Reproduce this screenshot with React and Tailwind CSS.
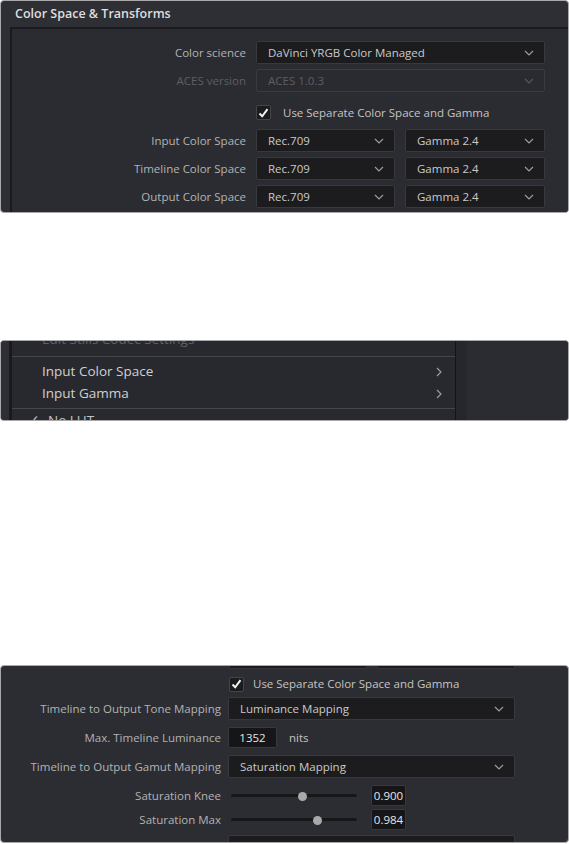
import React from "react";

const font = "font-['Open_Sans','Noto_Sans',sans-serif]";

function Chevron({ dim }) {
  return (
    <svg width="10" height="6" viewBox="0 0 10 6" className="shrink-0">
      <polyline
        points="1,1 5,5 9,1"
        fill="none"
        stroke={dim ? "#55565b" : "#9a9b9f"}
        strokeWidth="1.2"
      />
    </svg>
  );
}

function Select({ value, width, dim, height = "h-[23px]" }) {
  return (
    <div
      className={`${width} ${height} shrink-0 flex items-center justify-between pl-[11px] pr-[10px] rounded-[2px] border ${
        dim
          ? "bg-[#2a2b30] border-[#3a3b40] text-[#5d5e63]"
          : "bg-[#1c1c1f] border-[#38393e] text-[#c9c9c9]"
      }`}
    >
      <span>{value}</span>
      <Chevron dim={dim} />
    </div>
  );
}

function Check() {
  return (
    <div className="w-[15px] h-[15px] rounded-[2px] bg-[#1c1c1f] border border-[#444549] flex items-center justify-center">
      <svg width="11" height="10" viewBox="0 0 11 10">
        <path d="M1.5 5.5 L4.2 8.3 L9.5 1.2" fill="none" stroke="#f2f2f2" strokeWidth="2" />
      </svg>
    </div>
  );
}

function Slider({ pos }) {
  return (
    <div className="relative w-[126px] h-[10px] flex items-center ml-[3px]">
      <div className="w-full h-[3px] rounded-full bg-[#17171a]" />
      <div
        className="absolute top-[1px] w-[9px] h-[9px] rounded-full bg-[#a9a9ab]"
        style={{ left: pos }}
      />
    </div>
  );
}

function ValueBox({ value, width = "w-[35px]", extra = "" }) {
  return (
    <div className={`${width} ${extra} h-[21px] flex items-center justify-center rounded-[2px] bg-[#161618] border border-[#38393e] text-[#e6e6e6]`}>
      {value}
    </div>
  );
}

export default function App() {
  return (
    <div className={`w-[569px] bg-white ${font} text-[11.5px] leading-none`}>
      {/* Panel 1 */}
      <div className="h-[213px] rounded-[4px] border border-[#a9a9ab] bg-[#2e2f34] overflow-hidden flex flex-col">
        <div className="h-[26px] shrink-0 flex items-center px-[14px] text-[12.5px] font-semibold text-[#dedede]">
          Color Space &amp; Transforms
        </div>
        <div className="flex-1 ml-[9px] border-l-2 border-t-2 border-[#1b1b1e] bg-[#2b2c31] pt-[12px] flex flex-col gap-[5px]">
          <div className="flex items-center gap-[10px]">
            <div className="w-[234px] text-right text-[#b3b3b3]">Color science</div>
            <Select value="DaVinci YRGB Color Managed" width="w-[289px]" />
          </div>
          <div className="flex items-center gap-[10px]">
            <div className="w-[234px] text-right text-[#5d5e63]">ACES version</div>
            <Select value="ACES 1.0.3" width="w-[289px]" dim />
          </div>
          <div className="h-[27px] flex items-center gap-[12px] pl-[244px] pt-[4px]">
            <Check />
            <span className="text-[#c4c4c4]">Use Separate Color Space and Gamma</span>
          </div>
          {["Input Color Space", "Timeline Color Space", "Output Color Space"].map((l) => (
            <div key={l} className="flex items-center gap-[10px]">
              <div className="w-[234px] text-right text-[#b3b3b3]">{l}</div>
              <Select value="Rec.709" width="w-[139px]" />
              <Select value="Gamma 2.4" width="w-[140px]" />
            </div>
          ))}
        </div>
      </div>

      <div className="h-[127px]" />

      {/* Panel 2 */}
      <div className="h-[81px] rounded-[4px] border border-[#a9a9ab] bg-[#2b2c31] overflow-hidden flex">
        <div className="w-[8px] bg-[#2e2f34]" />
        <div className="w-[3px] bg-[#1a1a1d]" />
        <div className="w-[443px] bg-[#28292e] flex flex-col text-[13.5px]">
          <div className="h-[15px] shrink-0 overflow-hidden relative">
            <div className="absolute left-[30px] top-[-8px] text-[#5f6065]">Edit Stills Codec Settings</div>
          </div>
          <div className="h-[1px] shrink-0 bg-[#45464b]" />
          <div className="flex flex-col pt-[4px] pb-[3px] text-[#d0d0d0]">
            {["Input Color Space", "Input Gamma"].map((t) => (
              <div key={t} className="h-[22px] flex items-center justify-between pl-[30px] pr-[13px]">
                <span>{t}</span>
                <svg width="6" height="10" viewBox="0 0 6 10">
                  <polyline points="1,1 5,5 1,9" fill="none" stroke="#9a9b9f" strokeWidth="1.2" />
                </svg>
              </div>
            ))}
          </div>
          <div className="h-[1px] shrink-0 bg-[#45464b]" />
          <div className="flex-1 relative overflow-hidden text-[#c4c4c4]">
            <div className="absolute left-[16px] top-[5px] flex gap-[8px]">
              <span>✓</span>
              <span>No LUT</span>
            </div>
          </div>
        </div>
        <div className="w-[1px] bg-[#141416]" />
        <div className="w-[11px] bg-[#26272b]" />
        <div className="flex-1 bg-[#2b2c31]" />
      </div>

      <div className="h-[244px]" />

      {/* Panel 3 */}
      <div className="h-[178px] rounded-[4px] border border-[#a9a9ab] bg-[#2c2d32] overflow-hidden flex flex-col gap-[8px]">
        <div className="h-[3px] shrink-0 flex gap-[10px] pl-[228px]">
          <div className="w-[138px] h-full bg-[#1c1c1f] border-x border-b border-[#38393e] rounded-b-[2px]" />
          <div className="w-[138px] h-full bg-[#1c1c1f] border-x border-b border-[#38393e] rounded-b-[2px]" />
        </div>
        <div className="h-[14px] shrink-0 flex items-center gap-[9px] pl-[228px]">
          <Check />
          <span className="text-[#c4c4c4]">Use Separate Color Space and Gamma</span>
        </div>
        <div className="flex items-center gap-[7px] mt-[-2px]">
          <div className="w-[220px] text-right text-[#b3b3b3]">Timeline to Output Tone Mapping</div>
          <Select value="Luminance Mapping" width="w-[287px]" />
        </div>
        <div className="flex items-center gap-[7px] mt-[-1px]">
          <div className="w-[220px] text-right text-[#b3b3b3]">Max. Timeline Luminance</div>
          <ValueBox value="1352" width="w-[49px]" />
          <span className="ml-[5px] text-[#c4c4c4]">nits</span>
        </div>
        <div className="flex items-center gap-[7px] mt-[-1px]">
          <div className="w-[220px] text-right text-[#b3b3b3]">Timeline to Output Gamut Mapping</div>
          <Select value="Saturation Mapping" width="w-[287px]" />
        </div>
        <div className="flex flex-col gap-[3px] mt-[-1px]">
          <div className="flex items-center gap-[7px]">
            <div className="w-[220px] text-right text-[#b3b3b3]">Saturation Knee</div>
            <Slider pos={67} />
            <ValueBox value="0.900" extra="ml-[7px]" />
          </div>
          <div className="flex items-center gap-[7px]">
            <div className="w-[220px] text-right text-[#b3b3b3]">Saturation Max</div>
            <Slider pos={82} />
            <ValueBox value="0.984" extra="ml-[7px]" />
          </div>
        </div>
        <div className="flex gap-[7px] mt-[-3px]">
          <div className="w-[220px]" />
          <div className="w-[287px] h-[23px] bg-[#1c1c1f] border border-[#38393e] rounded-[2px]" />
        </div>
      </div>
      <div className="h-[1px]" />
    </div>
  );
}
